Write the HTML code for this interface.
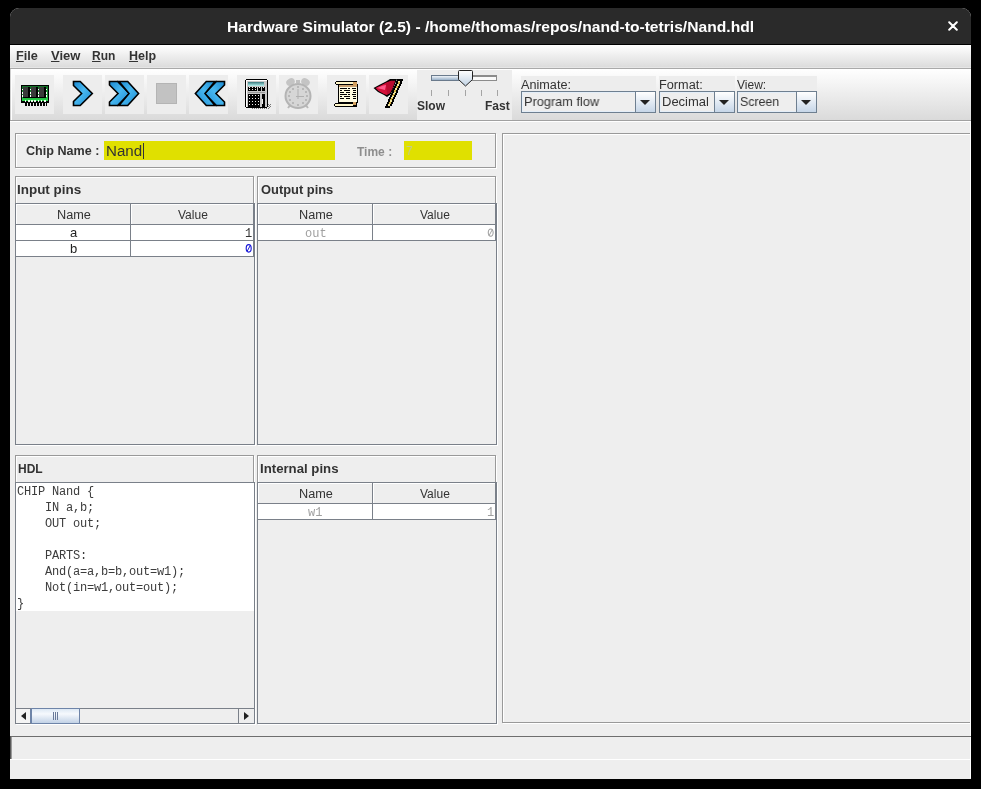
<!DOCTYPE html>
<html><head><meta charset="utf-8">
<style>
*{margin:0;padding:0;box-sizing:border-box}
html,body{width:981px;height:789px;overflow:hidden;background:#000}
body{position:relative;font-family:"Liberation Sans",sans-serif;-webkit-font-smoothing:antialiased}
.t,pre,.cbtxt{will-change:transform}
.a{position:absolute}
.t{position:absolute;white-space:nowrap;line-height:1;transform-origin:0 0}
#win{left:10px;top:8px;width:961px;height:771px;background:#eeeeee;border-radius:9px 9px 0 0;overflow:hidden}
.ln{position:absolute;height:1px}
.vl{position:absolute;width:1px}
.mi{font-size:12px;font-weight:bold;color:#333}
.btn{position:absolute;top:75px;width:39px;height:39px;background:#ededed}
.lbl{font-size:12px;color:#333}
.bold{font-weight:bold}
.mono{font-family:"Liberation Mono",monospace;font-size:12px}
.etd{position:absolute;border:1px solid #999}
.etw{position:absolute;border:1px solid #fff}
.pane{position:absolute;border:1px solid #7a8089;background:#eeeeee;box-shadow:1px 1px 0 #fff}
.hdr{position:absolute;background:#eeeeee;border-bottom:1px solid #7a8089;box-shadow:inset 0 1px 0 #fff, inset 1px 0 0 #fff}
.row{position:absolute;height:16px;background:#fff;border-bottom:1px solid #7a8089}
.combo{position:absolute;top:91px;height:22px;border:1px solid #6e7f90;background:#eeeeee;box-shadow:inset 1px 1px 0 #e4eef8, inset -1px -1px 0 #e4eef8}
.cbtxt{position:absolute;left:3px;top:3px;transform-origin:0 0;font-size:13px;color:#333;white-space:nowrap;line-height:1}
.cbb{position:absolute;right:0;top:0;width:20px;height:20px;border-left:1px solid #6e7f90;background:linear-gradient(#ffffff,#c6d6e8)}
.cbb:after{content:"";position:absolute;left:4px;top:8px;border-left:5px solid transparent;border-right:5px solid transparent;border-top:5px solid #222}
.cell{font-size:13px;color:#222}
</style></head><body>
<div id="win" class="a"></div>
<!-- title bar -->
<div class="a" style="left:10px;top:8px;width:961px;height:36px;background:#2a2a2a;border-radius:9px 9px 0 0"></div>
<div class="t" style="left:10px;top:19px;width:961px;text-align:center;color:#fff;font-weight:bold;font-size:15px;transform:scaleX(1.042);transform-origin:50% 0">Hardware Simulator (2.5) - /home/thomas/repos/nand-to-tetris/Nand.hdl</div>
<svg class="a" style="left:948px;top:21px" width="10" height="10" viewBox="0 0 10 10"><path d="M1.2 1.2L8.8 8.8M8.8 1.2L1.2 8.8" stroke="#fff" stroke-width="2" stroke-linecap="round"/></svg>

<!-- menu bar -->
<div class="ln" style="left:10px;top:44px;width:961px;background:#000"></div>
<div class="a" style="left:10px;top:45px;width:961px;height:22px;background:linear-gradient(#ffffff,#dcdcdc)"></div>
<div class="ln" style="left:10px;top:67px;width:961px;background:#e6e6e6"></div>
<div class="ln" style="left:10px;top:68px;width:961px;background:#a9a9a9"></div>
<div class="t mi" style="left:16.3px;top:50px;transform:scaleX(1.06)"><span style="text-decoration:underline">F</span>ile</div>
<div class="t mi" style="left:50.6px;top:50px;transform:scaleX(1.085)"><span style="text-decoration:underline">V</span>iew</div>
<div class="t mi" style="left:92.2px;top:50px"><span style="text-decoration:underline">R</span>un</div>
<div class="t mi" style="left:129px;top:50px;transform:scaleX(1.04)"><span style="text-decoration:underline">H</span>elp</div>

<!-- toolbar -->
<div class="a" style="left:10px;top:69px;width:961px;height:51px;background:linear-gradient(#ffffff,#dadada)"></div>
<div class="ln" style="left:10px;top:120px;width:961px;background:#a0a0a0"></div>
<div class="vl" style="left:10px;top:69px;height:51px;background:#cfcfcf"></div>
<div class="vl" style="left:11px;top:69px;height:51px;background:#fff"></div>
<div class="ln" style="left:10px;top:121px;width:961px;background:#ffffff"></div>

<div class="btn" style="left:15px"></div>
<div class="btn" style="left:63px"></div>
<div class="btn" style="left:105px"></div>
<div class="btn" style="left:147px"></div>
<div class="btn" style="left:189px"></div>
<div class="btn" style="left:237px"></div>
<div class="btn" style="left:279px"></div>
<div class="btn" style="left:327px"></div>
<div class="btn" style="left:369px"></div>


<!-- icons -->
<svg class="a" style="left:20px;top:84px" width="30" height="23" viewBox="20 84 30 23" shape-rendering="crispEdges">
 <defs><linearGradient id="gchip" x1="0" y1="0" x2="0" y2="1"><stop offset="0" stop-color="#137028"/><stop offset="0.6" stop-color="#1c9a36"/><stop offset="1" stop-color="#2ad84a"/></linearGradient></defs>
 <rect x="21" y="85" width="28" height="18" fill="#000"/>
 <rect x="22" y="86" width="26" height="15" fill="url(#gchip)"/>
 <rect x="23" y="87" width="6" height="11" fill="#3a3a3a"/><rect x="28" y="87" width="2" height="11" fill="#000"/>
 <rect x="31" y="87" width="6" height="11" fill="#3a3a3a"/><rect x="36" y="87" width="2" height="11" fill="#000"/>
 <rect x="39" y="87" width="6" height="11" fill="#3a3a3a"/><rect x="44" y="87" width="2" height="11" fill="#000"/>
 <rect x="23" y="97" width="23" height="1" fill="#000"/>
 <g fill="#fff"><rect x="22" y="89" width="1" height="1"/><rect x="22" y="92" width="1" height="2"/><rect x="22" y="95" width="1" height="2"/>
 <rect x="30" y="89" width="1" height="1"/><rect x="30" y="92" width="1" height="2"/><rect x="30" y="95" width="1" height="2"/>
 <rect x="38" y="89" width="1" height="1"/><rect x="38" y="92" width="1" height="2"/><rect x="38" y="95" width="1" height="2"/>
 <rect x="46" y="89" width="1" height="1"/><rect x="46" y="92" width="1" height="2"/><rect x="46" y="95" width="1" height="2"/></g>
 <g fill="#e8ffe8"><rect x="25" y="100" width="1" height="2"/><rect x="28" y="100" width="2" height="2"/><rect x="31" y="100" width="2" height="2"/><rect x="34" y="100" width="2" height="2"/><rect x="38" y="100" width="1" height="2"/><rect x="41" y="100" width="1" height="2"/><rect x="44" y="100" width="2" height="2"/></g>
 <rect x="22" y="102" width="26" height="1" fill="#000"/>
 <g fill="#000"><rect x="25" y="103" width="2" height="3"/><rect x="28" y="103" width="2" height="3"/><rect x="31" y="103" width="2" height="3"/><rect x="34" y="103" width="2" height="3"/><rect x="37" y="103" width="2" height="3"/><rect x="40" y="103" width="2" height="3"/><rect x="43" y="103" width="2" height="3"/><rect x="46" y="103" width="1" height="3"/></g>
</svg>
<svg class="a" style="left:60px;top:75px" width="40" height="40" viewBox="60 75 40 40">
 <defs><linearGradient id="gblue" x1="0" y1="0" x2="1" y2="1"><stop offset="0" stop-color="#1a88d0"/><stop offset="0.45" stop-color="#48b8f0"/><stop offset="1" stop-color="#1a88d0"/></linearGradient></defs>
 <path d="M73.5 81.5H80.2L92.3 93.5L80.2 105.5H73.5V101.5L81.6 93.5L73.5 85.5Z" fill="url(#gblue)" stroke="#000" stroke-width="1.6" stroke-linejoin="miter"/>
</svg>
<svg class="a" style="left:105px;top:75px" width="40" height="40" viewBox="105 75 40 40">
 <path d="M109.5 81.5H117.6L129.4 93.5L117.6 105.5H109.5V102L118 93.5L109.5 85Z" fill="url(#gblue)" stroke="#000" stroke-width="1.6"/>
 <path d="M119 81.5H127.7L138.6 93.5L127.7 105.5H119L129 93.5Z" fill="url(#gblue)" stroke="#000" stroke-width="1.6"/>
</svg>
<svg class="a" style="left:147px;top:75px" width="39" height="39"><rect x="9.5" y="8.5" width="20" height="20" fill="#c2c2c2" stroke="#b4b4b4"/></svg>
<svg class="a" style="left:189px;top:75px" width="40" height="40" viewBox="105 75 40 40" transform="scale(-1,1)">
 <path d="M109.5 81.5H117.6L129.4 93.5L117.6 105.5H109.5V102L118 93.5L109.5 85Z" fill="url(#gblue)" stroke="#000" stroke-width="1.6"/>
 <path d="M119 81.5H127.7L138.6 93.5L127.7 105.5H119L129 93.5Z" fill="url(#gblue)" stroke="#000" stroke-width="1.6"/>
</svg>
<svg class="a" style="left:243px;top:77px" width="32" height="34" viewBox="243 77 32 34" shape-rendering="crispEdges">
 <defs><linearGradient id="gdisp" x1="0" y1="0" x2="0" y2="1"><stop offset="0" stop-color="#3a7a80"/><stop offset="1" stop-color="#b8f4f0"/></linearGradient></defs>
 <g fill="#777"><rect x="252" y="108" width="1" height="1"/><rect x="254" y="108" width="1" height="1"/><rect x="256" y="108" width="1" height="1"/><rect x="258" y="108" width="1" height="1"/><rect x="260" y="108" width="1" height="1"/><rect x="262" y="108" width="1" height="1"/><rect x="264" y="108" width="1" height="1"/><rect x="266" y="108" width="1" height="1"/>
 <rect x="268" y="104" width="1" height="1"/><rect x="270" y="104" width="1" height="1"/><rect x="269" y="105" width="1" height="1"/><rect x="268" y="106" width="1" height="1"/><rect x="270" y="106" width="1" height="1"/><rect x="269" y="107" width="1" height="1"/><rect x="268" y="108" width="1" height="1"/></g>
 <rect x="245" y="80" width="23" height="27" fill="#000"/><rect x="246" y="79" width="21" height="29" fill="#000"/>
 <rect x="246" y="80" width="21" height="27" fill="#c8c8c8"/>
 <rect x="246" y="80" width="21" height="1" fill="#fff"/><rect x="246" y="80" width="1" height="27" fill="#fff"/>
 <rect x="248" y="82" width="16" height="4" fill="url(#gdisp)"/>
 <rect x="248" y="87" width="9" height="4" fill="#000"/><rect x="258" y="87" width="3" height="4" fill="#000"/><rect x="262" y="87" width="3" height="4" fill="#000"/>
 <g fill="#eee"><rect x="249" y="87" width="1" height="1"/><rect x="252" y="87" width="1" height="1"/><rect x="255" y="87" width="1" height="1"/><rect x="259" y="87" width="1" height="1"/><rect x="263" y="87" width="1" height="1"/><rect x="249" y="89" width="1" height="1"/><rect x="252" y="89" width="1" height="1"/><rect x="255" y="89" width="1" height="1"/></g>
 <rect x="248" y="92" width="17" height="1" fill="#999"/>
 <rect x="248" y="94" width="12" height="13" fill="#000"/>
 <g fill="#eee"><rect x="249" y="95" width="1" height="1"/><rect x="252" y="95" width="1" height="1"/><rect x="255" y="95" width="1" height="1"/><rect x="258" y="95" width="1" height="1"/>
 <rect x="249" y="98" width="1" height="1"/><rect x="252" y="98" width="1" height="1"/><rect x="255" y="98" width="1" height="1"/><rect x="258" y="98" width="1" height="1"/>
 <rect x="249" y="101" width="1" height="1"/><rect x="252" y="101" width="1" height="1"/><rect x="255" y="101" width="1" height="1"/><rect x="258" y="101" width="1" height="1"/>
 <rect x="249" y="104" width="1" height="1"/><rect x="252" y="104" width="1" height="1"/><rect x="255" y="104" width="1" height="1"/><rect x="258" y="104" width="1" height="1"/></g>
 <rect x="262" y="94" width="3" height="13" fill="#000"/><rect x="262" y="99" width="1" height="5" fill="#eee"/>
</svg>
<svg class="a" style="left:282px;top:75px" width="34" height="37" viewBox="282 75 34 37">
 <ellipse cx="290.5" cy="82" rx="4.5" ry="3.5" fill="#c4c4c4" transform="rotate(-30 290.5 82)"/>
 <ellipse cx="305.5" cy="82" rx="4.5" ry="3.5" fill="#c4c4c4" transform="rotate(30 305.5 82)"/>
 <rect x="296" y="80" width="4" height="3" fill="#c0c0c0"/>
 <path d="M288 108L291 104M308 108L305 104" stroke="#b8b8b8" stroke-width="2"/>
 <ellipse cx="298" cy="96" rx="12.5" ry="12" fill="#d6d6d6" stroke="#b4b4b4" stroke-width="2"/>
 <g fill="#b8b8b8"><rect x="297" y="86" width="2" height="2"/><rect x="297" y="104" width="2" height="2"/><rect x="288" y="95" width="2" height="2"/><rect x="306" y="95" width="2" height="2"/>
 <rect x="292" y="88" width="2" height="2"/><rect x="302" y="88" width="2" height="2"/><rect x="292" y="102" width="2" height="2"/><rect x="302" y="102" width="2" height="2"/>
 <rect x="289" y="91" width="2" height="2"/><rect x="305" y="91" width="2" height="2"/><rect x="289" y="99" width="2" height="2"/><rect x="305" y="99" width="2" height="2"/></g>
 <rect x="297.5" y="89" width="1" height="10" fill="#b0b0b0"/><rect x="296" y="96" width="8" height="1" fill="#b0b0b0"/>
</svg>
<svg class="a" style="left:332px;top:79px" width="28" height="30" viewBox="332 79 28 30" shape-rendering="crispEdges">
 <rect x="338" y="84" width="20" height="19" fill="#000"/>
 <rect x="339" y="85" width="18" height="17" fill="#fffbe0"/>
 <rect x="339" y="85" width="18" height="2" fill="#c8a070"/>
 <rect x="336" y="81" width="21" height="4" fill="#000"/><rect x="335" y="82" width="1" height="2" fill="#000"/>
 <rect x="336" y="82" width="17" height="2" fill="#fff6c8"/>
 <rect x="353" y="82" width="4" height="4" fill="#d4a060"/>
 <rect x="335" y="103" width="22" height="4" fill="#000"/><rect x="334" y="104" width="1" height="2" fill="#000"/>
 <rect x="335" y="104" width="18" height="2" fill="#fff6c8"/>
 <rect x="353" y="102" width="3" height="3" fill="#d4a060"/>
 <g fill="#000"><rect x="340" y="88" width="7" height="1"/><rect x="348" y="88" width="2" height="1"/><rect x="352" y="88" width="4" height="1"/>
 <rect x="340" y="90" width="2" height="1"/><rect x="344" y="90" width="6" height="1"/><rect x="353" y="90" width="3" height="1"/>
 <rect x="340" y="92" width="4" height="1"/><rect x="346" y="92" width="4" height="1"/><rect x="353" y="92" width="3" height="1"/>
 <rect x="340" y="94" width="7" height="1"/><rect x="348" y="94" width="2" height="1"/><rect x="352" y="94" width="4" height="1"/>
 <rect x="340" y="96" width="2" height="1"/><rect x="344" y="96" width="6" height="1"/><rect x="353" y="96" width="3" height="1"/>
 <rect x="340" y="98" width="4" height="1"/><rect x="346" y="98" width="4" height="1"/><rect x="353" y="98" width="3" height="1"/></g>
</svg>
<svg class="a" style="left:370px;top:76px" width="36" height="35" viewBox="370 76 36 35">
 <path d="M373.5 88L380 84.5L386 81.5L390 79H397L395.5 83L393.5 88L391 94L387 97L384 95L378 92Z" fill="#000"/>
 <path d="M375.5 88L381 85.2L386.5 82.5L391 80.8H395L392.5 88L390 93L386.5 95L383 93.5L378.5 91Z" fill="#d4103a"/>
 <path d="M386 83L391 81H395L392.5 88L390 93L387 94.5Z" fill="#b80c30"/>
 <path d="M377 88L383 85.5L386 85L385 90Z" fill="#ff5a8a"/>
 <g shape-rendering="crispEdges"><rect x="397" y="79" width="6" height="2" fill="#000"/><rect x="396" y="81" width="2" height="1" fill="#000"/><rect x="398" y="81" width="2" height="1" fill="#f4e8a0"/><rect x="400" y="81" width="2" height="1" fill="#000"/><rect x="396" y="82" width="2" height="1" fill="#000"/><rect x="398" y="82" width="2" height="1" fill="#d4b040"/><rect x="400" y="82" width="2" height="1" fill="#000"/><rect x="396" y="83" width="2" height="1" fill="#000"/><rect x="398" y="83" width="2" height="1" fill="#d4b040"/><rect x="400" y="83" width="2" height="1" fill="#000"/><rect x="395" y="84" width="2" height="1" fill="#000"/><rect x="397" y="84" width="2" height="1" fill="#f4e8a0"/><rect x="399" y="84" width="2" height="1" fill="#000"/><rect x="395" y="85" width="2" height="1" fill="#000"/><rect x="397" y="85" width="2" height="1" fill="#f4e8a0"/><rect x="399" y="85" width="2" height="1" fill="#000"/><rect x="394" y="86" width="2" height="1" fill="#000"/><rect x="396" y="86" width="2" height="1" fill="#d4b040"/><rect x="398" y="86" width="2" height="1" fill="#000"/><rect x="394" y="87" width="2" height="1" fill="#000"/><rect x="396" y="87" width="2" height="1" fill="#d4b040"/><rect x="398" y="87" width="2" height="1" fill="#000"/><rect x="393" y="88" width="2" height="1" fill="#000"/><rect x="395" y="88" width="2" height="1" fill="#f4e8a0"/><rect x="397" y="88" width="2" height="1" fill="#000"/><rect x="393" y="89" width="2" height="1" fill="#000"/><rect x="395" y="89" width="2" height="1" fill="#f4e8a0"/><rect x="397" y="89" width="2" height="1" fill="#000"/><rect x="392" y="90" width="2" height="1" fill="#000"/><rect x="394" y="90" width="2" height="1" fill="#d4b040"/><rect x="396" y="90" width="2" height="1" fill="#000"/><rect x="392" y="91" width="2" height="1" fill="#000"/><rect x="394" y="91" width="2" height="1" fill="#d4b040"/><rect x="396" y="91" width="2" height="1" fill="#000"/><rect x="392" y="92" width="2" height="1" fill="#000"/><rect x="394" y="92" width="2" height="1" fill="#f4e8a0"/><rect x="396" y="92" width="2" height="1" fill="#000"/><rect x="391" y="93" width="2" height="1" fill="#000"/><rect x="393" y="93" width="2" height="1" fill="#f4e8a0"/><rect x="395" y="93" width="2" height="1" fill="#000"/><rect x="391" y="94" width="2" height="1" fill="#000"/><rect x="393" y="94" width="2" height="1" fill="#d4b040"/><rect x="395" y="94" width="2" height="1" fill="#000"/><rect x="390" y="95" width="2" height="1" fill="#000"/><rect x="392" y="95" width="2" height="1" fill="#d4b040"/><rect x="394" y="95" width="2" height="1" fill="#000"/><rect x="390" y="96" width="2" height="1" fill="#000"/><rect x="392" y="96" width="2" height="1" fill="#f4e8a0"/><rect x="394" y="96" width="2" height="1" fill="#000"/><rect x="389" y="97" width="2" height="1" fill="#000"/><rect x="391" y="97" width="2" height="1" fill="#f4e8a0"/><rect x="393" y="97" width="2" height="1" fill="#000"/><rect x="389" y="98" width="2" height="1" fill="#000"/><rect x="391" y="98" width="2" height="1" fill="#d4b040"/><rect x="393" y="98" width="2" height="1" fill="#000"/><rect x="388" y="99" width="2" height="1" fill="#000"/><rect x="390" y="99" width="2" height="1" fill="#d4b040"/><rect x="392" y="99" width="2" height="1" fill="#000"/><rect x="388" y="100" width="2" height="1" fill="#000"/><rect x="390" y="100" width="2" height="1" fill="#f4e8a0"/><rect x="392" y="100" width="2" height="1" fill="#000"/><rect x="388" y="101" width="2" height="1" fill="#000"/><rect x="390" y="101" width="2" height="1" fill="#f4e8a0"/><rect x="392" y="101" width="2" height="1" fill="#000"/><rect x="387" y="102" width="2" height="1" fill="#000"/><rect x="389" y="102" width="2" height="1" fill="#d4b040"/><rect x="391" y="102" width="2" height="1" fill="#000"/><rect x="387" y="103" width="2" height="1" fill="#000"/><rect x="389" y="103" width="2" height="1" fill="#d4b040"/><rect x="391" y="103" width="2" height="1" fill="#000"/><rect x="386" y="104" width="2" height="1" fill="#000"/><rect x="388" y="104" width="2" height="1" fill="#f4e8a0"/><rect x="390" y="104" width="2" height="1" fill="#000"/><rect x="386" y="105" width="2" height="1" fill="#000"/><rect x="388" y="105" width="2" height="1" fill="#f4e8a0"/><rect x="390" y="105" width="2" height="1" fill="#000"/><rect x="385" y="106" width="5" height="2" fill="#000"/></g>
</svg>

<!-- slider panel -->
<div class="a" style="left:417px;top:70px;width:95px;height:50px;background:#ededed"></div>
<svg class="a" style="left:417px;top:68px" width="95" height="32" viewBox="417 68 95 32" shape-rendering="crispEdges">
 <defs><linearGradient id="gtr" x1="0" y1="0" x2="0" y2="1"><stop offset="0" stop-color="#eef3f8"/><stop offset="1" stop-color="#98b0c8"/></linearGradient>
 <linearGradient id="gth" x1="0" y1="0" x2="0" y2="1"><stop offset="0" stop-color="#ffffff"/><stop offset="1" stop-color="#c0d2e4"/></linearGradient></defs>
 <rect x="431" y="75" width="66" height="6" fill="#fafafa"/>
 <rect x="461" y="75" width="36" height="2" fill="#8c8c8c"/>
 <rect x="496" y="75" width="1" height="6" fill="#8c8c8c"/>
 <rect x="461" y="80" width="36" height="1" fill="#8c8c8c"/>
 <rect x="431" y="76" width="30" height="4" fill="url(#gtr)"/>
 <path d="M431.5 75.5H461V80.5H431.5Z" fill="none" stroke="#6a7a8c"/>
 <path d="M458.5 71.5Q458.5 70.5 459.5 70.5H471.5Q472.5 70.5 472.5 71.5V79.5L465.5 86L458.5 79.5Z" fill="url(#gth)" stroke="#222" shape-rendering="auto"/>
 <g fill="#a4a4a4"><rect x="431" y="90" width="1" height="6"/><rect x="448" y="90" width="1" height="6"/><rect x="465" y="90" width="1" height="6"/><rect x="481" y="90" width="1" height="6"/><rect x="497" y="90" width="1" height="6"/></g>
</svg>
<div class="t bold" style="left:417px;top:100px;font-size:12px;color:#333">Slow</div>
<div class="t bold" style="left:484.8px;top:100px;font-size:12px;color:#333">Fast</div>

<!-- combos -->
<div class="a" style="left:521px;top:76px;width:135px;height:37px;background:#ededed"></div>
<div class="a" style="left:659px;top:76px;width:76px;height:37px;background:#ededed"></div>
<div class="a" style="left:737px;top:76px;width:80px;height:37px;background:#ededed"></div>
<div class="t lbl" style="left:521px;top:79px;transform:scaleX(1.055)">Animate:</div>
<div class="t lbl" style="left:658.6px;top:79px;transform:scaleX(1.06)">Format:</div>
<div class="t lbl" style="left:737.3px;top:79px">View:</div>
<div class="combo" style="left:521px;width:135px"><div class="cbtxt" style="left:1.8px;transform:scaleX(0.98)">Program flow</div><div class="cbb"></div></div>
<div class="combo" style="left:659px;width:76px"><div class="cbtxt" style="left:1.6px">Decimal</div><div class="cbb"></div></div>
<div class="combo" style="left:737px;width:80px"><div class="cbtxt" style="left:1.6px;transform:scaleX(0.95)">Screen</div><div class="cbb"></div></div>

<!-- chip name panel -->
<div class="etw" style="left:16px;top:134px;width:481px;height:35px"></div>
<div class="etd" style="left:15px;top:133px;width:481px;height:35px"></div>
<div class="t bold" style="left:26.4px;top:145px;font-size:12px;color:#333;transform:scaleX(1.048)">Chip Name :</div>
<div class="a" style="left:104px;top:141px;width:231px;height:19px;background:#e0e000"></div>
<div class="t" style="left:106px;top:144px;font-size:14px;color:#333;transform:scaleX(1.08)">Nand</div>
<div class="a" style="left:143px;top:143px;width:1px;height:16px;background:#333"></div>
<div class="t bold" style="left:357px;top:146px;font-size:12px;color:#8e8e8e">Time :</div>
<div class="a" style="left:404px;top:141px;width:68px;height:19px;background:#e0e000"></div>
<div class="t" style="left:406px;top:145px;font-size:12px;color:#c4cc88">7</div>

<!-- right big panel -->
<div class="etw" style="left:503px;top:134px;width:468px;height:590px;border-right:none"></div>
<div class="etd" style="left:502px;top:133px;width:469px;height:590px;border-right:none"></div>
<div class="vl" style="left:970px;top:122px;height:656px;background:#fff"></div>

<!-- input pins -->
<div class="etw" style="left:16px;top:177px;width:239px;height:269px"></div>
<div class="etd" style="left:15px;top:176px;width:239px;height:269px"></div>
<div class="t bold" style="left:17px;top:184px;font-size:12px;color:#333;transform:scaleX(1.12)">Input pins</div>
<div class="pane" style="left:15px;top:203px;width:240px;height:242px"></div>
<div class="hdr" style="left:16px;top:204px;width:238px;height:21px"></div>
<div class="vl" style="left:130px;top:204px;height:52px;background:#7a8089"></div>
<div class="t lbl" style="left:57.4px;top:209px;transform:scaleX(1.058)">Name</div>
<div class="t lbl" style="left:178px;top:209px">Value</div>
<div class="row" style="left:16px;top:225px;width:238px"></div>
<div class="row" style="left:16px;top:241px;width:238px"></div>
<div class="vl" style="left:130px;top:225px;height:31px;background:#7a8089"></div>

<!-- output pins -->
<div class="etw" style="left:258px;top:177px;width:239px;height:269px"></div>
<div class="etd" style="left:257px;top:176px;width:239px;height:269px"></div>
<div class="t bold" style="left:260.5px;top:184px;font-size:12px;color:#333;transform:scaleX(1.073)">Output pins</div>
<div class="pane" style="left:257px;top:203px;width:240px;height:242px"></div>
<div class="hdr" style="left:258px;top:204px;width:238px;height:21px"></div>
<div class="t lbl" style="left:299.4px;top:209px;transform:scaleX(1.058)">Name</div>
<div class="t lbl" style="left:420px;top:209px">Value</div>
<div class="row" style="left:258px;top:225px;width:238px"></div>
<div class="vl" style="left:372px;top:204px;height:36px;background:#7a8089"></div>

<!-- HDL -->
<div class="etw" style="left:16px;top:456px;width:239px;height:268px"></div>
<div class="etd" style="left:15px;top:455px;width:239px;height:268px"></div>
<div class="t bold" style="left:18px;top:463px;font-size:12px;color:#333">HDL</div>
<div class="pane" style="left:15px;top:482px;width:240px;height:242px"></div>
<div class="a" style="left:16px;top:483px;width:238px;height:128px;background:#fff"></div>
<pre class="a mono" style="left:16.6px;top:484px;letter-spacing:-0.2px;line-height:16px;color:#3c3c3c">CHIP Nand {
    IN a,b;
    OUT out;

    PARTS:
    And(a=a,b=b,out=w1);
    Not(in=w1,out=out);
}</pre>

<!-- internal pins -->
<div class="etw" style="left:258px;top:456px;width:239px;height:268px"></div>
<div class="etd" style="left:257px;top:455px;width:239px;height:268px"></div>
<div class="t bold" style="left:260px;top:463px;font-size:12px;color:#333;transform:scaleX(1.1)">Internal pins</div>
<div class="pane" style="left:257px;top:482px;width:240px;height:242px"></div>
<div class="hdr" style="left:258px;top:483px;width:238px;height:21px"></div>
<div class="t lbl" style="left:299.4px;top:488px;transform:scaleX(1.058)">Name</div>
<div class="t lbl" style="left:420px;top:488px">Value</div>
<div class="row" style="left:258px;top:504px;width:238px"></div>
<div class="vl" style="left:372px;top:483px;height:36px;background:#7a8089"></div>



<div class="vl" style="left:131px;top:204px;height:20px;background:#fff"></div>
<div class="vl" style="left:373px;top:204px;height:20px;background:#fff"></div>
<div class="vl" style="left:373px;top:483px;height:20px;background:#fff"></div>
<div class="vl" style="left:253px;top:204px;height:52px;background:#7a8089"></div>
<div class="vl" style="left:495px;top:204px;height:36px;background:#7a8089"></div>
<div class="vl" style="left:495px;top:483px;height:36px;background:#7a8089"></div>
<!-- row data -->
<div class="t cell" style="left:70px;top:226px">a</div>
<div class="t cell" style="left:70px;top:242px">b</div>
<div class="t mono" style="left:245px;top:228px;color:#333">1</div>
<svg class="a" style="left:244px;top:243px" width="10" height="11" viewBox="0 0 10 11"><ellipse cx="4.7" cy="5.35" rx="2.5" ry="3.75" fill="none" stroke="#1818d8" stroke-width="1.15"/><path d="M6.3 2.4L3.1 8.3" stroke="#1818d8" stroke-width="1"/></svg>
<div class="t mono" style="left:304.7px;top:228px;color:#a0a0a0">out</div>
<svg class="a" style="left:486px;top:227px" width="10" height="11" viewBox="0 0 10 11"><ellipse cx="4.7" cy="5.6" rx="2.45" ry="3.7" fill="none" stroke="#9c9c9c" stroke-width="1.05"/><path d="M6.4 2.5L3.0 8.7" stroke="#9c9c9c" stroke-width="0.95"/></svg>
<div class="t mono" style="left:308px;top:507px;color:#a0a0a0">w1</div>
<div class="t mono" style="left:487px;top:507px;color:#a0a0a0">1</div>

<!-- HDL scrollbar -->
<div class="a" style="left:16px;top:708px;width:238px;height:15px;background:#eeeeee;border-top:1px solid #7a8089"></div>
<div class="a" style="left:16px;top:709px;width:15px;height:14px;background:#f4f4f4;border-right:1px solid #6e84a8"></div>
<svg class="a" style="left:19px;top:711px" width="8" height="10"><path d="M7 1V9L2 5Z" fill="#222"/></svg>
<div class="a" style="left:31px;top:708px;width:49px;height:16px;border:1px solid #6e84a8;background:linear-gradient(#dde8f4,#f6f9fd 35%,#c2d2e6)"></div>
<div class="a" style="left:53px;top:712px;width:1px;height:8px;background:#6a7a99"></div>
<div class="a" style="left:55px;top:712px;width:1px;height:8px;background:#6a7a99"></div>
<div class="a" style="left:57px;top:712px;width:1px;height:8px;background:#6a7a99"></div>
<div class="a" style="left:238px;top:709px;width:16px;height:14px;background:#eeeeee;border-left:1px solid #7a8089"></div>
<svg class="a" style="left:243px;top:711px" width="8" height="10"><path d="M1 1V9L6 5Z" fill="#222"/></svg>

<!-- status bar -->
<div class="ln" style="left:10px;top:736px;width:961px;background:#6e6e6e"></div>
<div class="vl" style="left:10px;top:736px;height:23px;background:#5a5a5a"></div>
<div class="vl" style="left:11px;top:737px;height:22px;background:#9a9a9a"></div>
<div class="ln" style="left:10px;top:759px;width:961px;background:#fff"></div>
</body></html>
